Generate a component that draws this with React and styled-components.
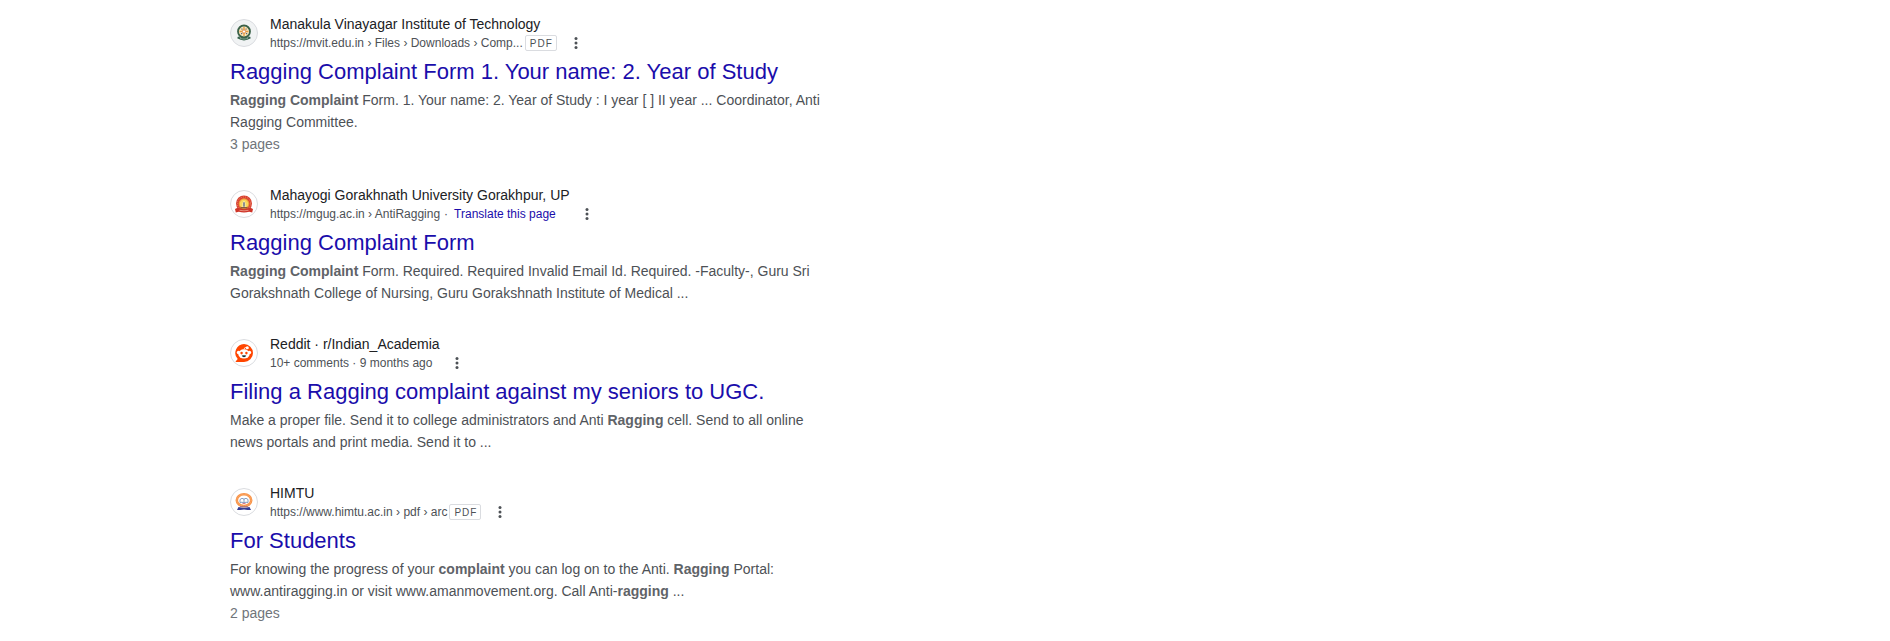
import React from "react";
import styled, { createGlobalStyle } from "styled-components";

const GlobalStyle = createGlobalStyle`
  * { box-sizing: border-box; }
  body {
    margin: 0;
    background: #fff;
    color: #4d5156;
    font-family: "Liberation Sans", Arial, sans-serif;
    font-size: 14px;
  }
`;

const Page = styled.main`
  padding: 14px 20px 10px 230px;
  @media (max-width: 900px) {
    padding-left: 20px;
  }
`;

const Results = styled.div`
  display: flex;
  flex-direction: column;
  gap: 30px;
  max-width: 600px;
`;

const Result = styled.article`
  display: flex;
  flex-direction: column;
`;

const Source = styled.header`
  display: flex;
  align-items: center;
  gap: 12px;
`;

const Avatar = styled.span`
  display: flex;
  flex: none;
  align-items: center;
  justify-content: center;
  width: 28px;
  height: 28px;
  border: 1px solid #dadce0;
  border-radius: 50%;
  background: ${(p) => p.$fill || "#fff"};
  svg { display: block; }
`;

const SiteName = styled.div`
  color: #202124;
  line-height: 20px;
`;

const SiteLine = styled.div`
  display: flex;
  align-items: center;
  height: 18px;
  font-size: 12px;
  line-height: 18px;
  white-space: nowrap;
`;

const Badge = styled.span`
  height: 16px;
  margin-left: 2px;
  padding: 0 3px 0 4px;
  border: 1px solid #dadce0;
  border-radius: 2px;
  font-size: 10px;
  line-height: 15px;
  letter-spacing: 1px;
`;

const Separator = styled.span`
  margin: 0 6px 0 4px;
`;

const PlainLink = styled.a`
  color: #1a0dab;
  text-decoration: none;
  &:hover { text-decoration: underline; }
`;

const MenuButton = styled.button`
  display: flex;
  width: 18px;
  height: 18px;
  margin: 0 0 0 ${(p) => p.$gap}px;
  padding: 0;
  border: 0;
  background: none;
  color: #4d5156;
  cursor: pointer;
`;

const Title = styled.h3`
  margin: 6px 0 3px;
  font-size: 22px;
  font-weight: 400;
  line-height: 28px;
`;

const Snippet = styled.p`
  margin: 0;
  line-height: 22px;
  b { color: #5f6368; }
`;

const Pages = styled.div`
  color: #70757a;
  line-height: 22px;
`;

function MvitIcon() {
  return (
    <svg width="18" height="18" viewBox="0 0 18 18" aria-hidden="true">
      <circle cx="9" cy="7.5" r="6" fill="#f6e9c0" stroke="#3b6148" strokeWidth="1.8" />
      <path d="M9 3v9M4.500 7.500h9" stroke="#e89a45" strokeWidth="1.400" />
      <path d="M5.800 4.300l6.400 6.400M12.200 4.300l-6.400 6.400" stroke="#eeb768" strokeWidth="1" />
      <circle cx="9" cy="7.500" r="1.600" fill="#fff" stroke="#e0803a" strokeWidth=".7" />
      <path d="M6.500 5h1M10.500 5h1M6 9.600h1.200M11 9.600h1.200" stroke="#4a5a86" />
      <path d="M3 12.600q6 3.200 12 0l.8 1.700q-6.800 4.200-13.600 0z" fill="#35604a" />
      <path d="M5 14.400q4 1.600 8 0" fill="none" stroke="#a6c2ab" strokeWidth=".6" />
    </svg>
  );
}

function MgugIcon() {
  return (
    <svg width="18" height="18" viewBox="0 0 18 18" aria-hidden="true">
      <circle cx="9" cy="8.500" r="8" fill="#d8402f" />
      <circle cx="9" cy="8.500" r="6.600" fill="none" stroke="#ef8c72" strokeWidth=".9" strokeDasharray="1 1" />
      <circle cx="9" cy="8.700" r="5.400" fill="#ee9a3d" />
      <circle cx="9" cy="8.700" r="4.300" fill="#f8d75c" />
      <path d="M7.600 12V8L9 5.800 10.400 8v4z" fill="#fbf4dc" />
      <path d="M9 7.300v4.400" stroke="#555a64" strokeWidth="1.300" />
      <path d="M5.500 12h7v1.400h-7z" fill="#8a5a3c" />
      <path d="M0 14l2.500-1.200q6.500 2.800 13 0L18 14l-.8 3.400-3-.6q-5.200 1.200-10.400 0l-3 .6z" fill="#cf3529" />
      <path d="M4.500 15.300q4.500 1 9 0" fill="none" stroke="#f2b3a0" strokeWidth=".7" />
    </svg>
  );
}

function RedditIcon() {
  return (
    <svg width="18" height="18" viewBox="0 0 18 18" aria-hidden="true">
      <path d="M9 0a9 9 0 1 1 0 18H1.200q-.9 0-.4-.7l1.900-2.200A9 9 0 0 1 9 0z" fill="#ff4500" />
      <path d="M9 5.400q.1-2.100 2.500-2" fill="none" stroke="#fff" strokeWidth=".8" />
      <circle cx="12.300" cy="3.700" r="1.500" fill="#fff" />
      <circle cx="3.500" cy="8.500" r="1.700" fill="#fff" />
      <circle cx="14.500" cy="8.500" r="1.700" fill="#fff" />
      <ellipse cx="9" cy="9.900" rx="5.700" ry="4.600" fill="#fff" />
      <ellipse cx="6.600" cy="9.100" rx="1.200" ry="1.300" fill="#ff4500" />
      <ellipse cx="11.400" cy="9.100" rx="1.200" ry="1.300" fill="#ff4500" />
      <path d="M6.700 11.500q2.300-.6 4.600 0-.6 1.700-2.300 1.700t-2.300-1.700z" fill="#18323a" />
    </svg>
  );
}

function HimtuIcon() {
  return (
    <svg width="18" height="18" viewBox="0 0 18 18" aria-hidden="true">
      <ellipse cx="9" cy="7.200" rx="7.200" ry="5.900" fill="#fff" stroke="#f8954a" strokeWidth="2.600" />
      <ellipse cx="9" cy="7.200" rx="7.200" ry="5.900" fill="none" stroke="#fbb27c" strokeWidth=".8" strokeDasharray="1 1" />
      <path d="M5 6.500q2-2.200 4-.4 2-1.800 4 .4M5 6.500v3q2-.8 4 .4 2-1.200 4-.4v-3M9 6v4" fill="none" stroke="#7895bd" strokeWidth=".9" />
      <path d="M7.500 10.500h3" stroke="#d97a8c" />
      <path d="M3.500 14q5.500 1.400 11 0l1.500 3h-3.500L9 16.400l-3.500.6H2z" fill="#343b91" />
      <path d="M5 13.600h8" stroke="#8b668f" strokeWidth=".7" />
    </svg>
  );
}

function MoreMenu({ gap, site }) {
  return (
    <MenuButton type="button" $gap={gap} aria-label={`About this result from ${site}`}>
      <svg width="18" height="18" viewBox="0 0 24 24" fill="currentColor" aria-hidden="true">
        <circle cx="12" cy="6" r="2" />
        <circle cx="12" cy="12" r="2" />
        <circle cx="12" cy="18" r="2" />
      </svg>
    </MenuButton>
  );
}

const results = [
  {
    site: "Manakula Vinayagar Institute of Technology",
    line: "https://mvit.edu.in › Files › Downloads › Comp...",
    icon: <MvitIcon />,
    fill: "#f1f3f4",
    pdf: true,
    menuGap: 10,
    title: "Ragging Complaint Form 1. Your name: 2. Year of Study",
    snippet: (
      <>
        <b>Ragging Complaint</b> Form. 1. Your name: 2. Year of Study : I year [ ] II year ... Coordinator, Anti
        Ragging Committee.
      </>
    ),
    pages: "3 pages",
  },
  {
    site: "Mahayogi Gorakhnath University Gorakhpur, UP",
    line: "https://mgug.ac.in › AntiRagging",
    icon: <MgugIcon />,
    translate: true,
    menuGap: 22,
    title: "Ragging Complaint Form",
    snippet: (
      <>
        <b>Ragging Complaint</b> Form. Required. Required Invalid Email Id. Required. -Faculty-, Guru Sri
        Gorakshnath College of Nursing, Guru Gorakshnath Institute of Medical ...
      </>
    ),
  },
  {
    site: "Reddit · r/Indian_Academia",
    line: "10+ comments · 9 months ago",
    icon: <RedditIcon />,
    menuGap: 16,
    title: "Filing a Ragging complaint against my seniors to UGC.",
    snippet: (
      <>
        Make a proper file. Send it to college administrators and Anti <b>Ragging</b> cell. Send to all online
        news portals and print media. Send it to ...
      </>
    ),
  },
  {
    site: "HIMTU",
    line: "https://www.himtu.ac.in › pdf › arc",
    icon: <HimtuIcon />,
    pdf: true,
    menuGap: 10,
    title: "For Students",
    snippet: (
      <>
        For knowing the progress of your <b>complaint</b> you can log on to the Anti. <b>Ragging</b> Portal:
        www.antiragging.in or visit www.amanmovement.org. Call Anti-<b>ragging</b> ...
      </>
    ),
    pages: "2 pages",
  },
];

export default function App() {
  return (
    <>
      <GlobalStyle />
      <Page>
        <Results>
          {results.map((r) => (
            <Result key={r.site}>
              <Source>
                <Avatar $fill={r.fill}>{r.icon}</Avatar>
                <div>
                  <SiteName>{r.site}</SiteName>
                  <SiteLine>
                    <span>{r.line}</span>
                    {r.pdf && <Badge>PDF</Badge>}
                    {r.translate && (
                      <>
                        <Separator>·</Separator>
                        <PlainLink href="#translate">Translate this page</PlainLink>
                      </>
                    )}
                    <MoreMenu gap={r.menuGap} site={r.site} />
                  </SiteLine>
                </div>
              </Source>
              <Title>
                <PlainLink href="#result">{r.title}</PlainLink>
              </Title>
              <Snippet>{r.snippet}</Snippet>
              {r.pages && <Pages>{r.pages}</Pages>}
            </Result>
          ))}
        </Results>
      </Page>
    </>
  );
}
